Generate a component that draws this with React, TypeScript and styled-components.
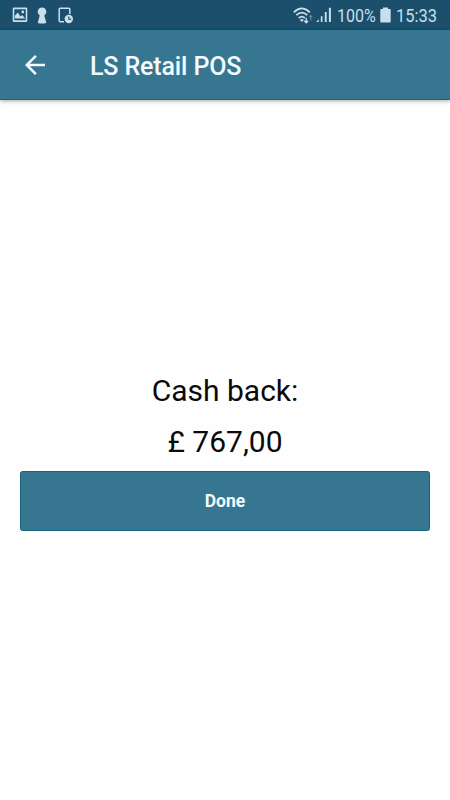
import React from "react";
import styled, { createGlobalStyle } from "styled-components";

const GlobalStyle = createGlobalStyle`
  * { box-sizing: border-box; }
  body { margin: 0; background: #fff; font-family: Roboto, sans-serif; }
`;

const Screen = styled.div`
  display: flex;
  flex-direction: column;
  width: 100%;
  height: 100vh;
  overflow: hidden;
  background: #fefefe;
`;

const StatusBar = styled.div`
  display: flex;
  align-items: center;
  justify-content: space-between;
  flex: none;
  height: 30px;
  padding: 0 13px 0 12px;
  background: #1b4f6c;
  color: #c9dfeb;
`;

const StatusGroup = styled.div`
  display: flex;
  align-items: center;
  svg { display: block; flex: none; }
`;

const StatusText = styled.div<{ $width: number; $scale: number }>`
  width: ${(p) => p.$width}px;
  font-size: 18.5px;
  line-height: 30px;
  padding-top: 1px;
  white-space: nowrap;
  transform: scaleX(${(p) => p.$scale});
  transform-origin: left center;
`;

const AppBar = styled.header`
  display: flex;
  align-items: center;
  flex: none;
  height: 70px;
  padding: 0 20px;
  background: #377691;
  border-top: 1px solid #2f7893;
  border-bottom: 1px solid #17647f;
  box-shadow: 0 1px 4px rgba(0, 0, 0, 0.35);
`;

const BackButton = styled.button`
  display: flex;
  width: 30px;
  height: 30px;
  padding: 0;
  border: 0;
  background: none;
  color: #f2fbff;
`;

const Title = styled.h1`
  margin: 4px 0 0 40px;
  font-size: 25px;
  font-weight: 500;
  letter-spacing: -0.13px;
  line-height: 32px;
  color: #f2fbff;
`;

const Content = styled.main`
  display: flex;
  flex: 1;
  flex-direction: column;
  justify-content: center;
  padding: 0 20px 3px;
`;

const Message = styled.div`
  height: 50px;
  font-size: 30px;
  line-height: 50px;
  text-align: center;
  color: #0a0a0a;

  &:first-child {
    height: 51px;
    margin-top: -1px;
  }
`;

const DoneButton = styled.button`
  height: 60px;
  margin-top: 4px;
  padding: 0;
  border: 1px solid #17647f;
  border-radius: 2.5px;
  background: #377691;
  color: #f2fbff;
  font: 700 17.5px/58px Roboto, sans-serif;
`;

const ImageIcon = () => (
  <svg width="16" height="16" viewBox="0 0 16 16">
    <path fill="currentColor" fillRule="evenodd" d="M2 .5h12q1.300 0 1.300 1.300v11.900q0 1.300-1.300 1.300H2q-1.300 0-1.300-1.300V1.800Q.7.500 2 .5ZM2.300 2.200v11.100h11.400V2.200Z" />
    <path fill="currentColor" d="M2.800 11.500V8.800l3-3.300 2.700 4 1.700-1.500 3 3.500Z" />
    <circle cx="10.800" cy="5" r="1.400" fill="currentColor" />
  </svg>
);

const KeyholeIcon = () => (
  <svg width="10" height="17" viewBox="0 0 10 17">
    <path fill="currentColor" d="M5 .5a4.300 4.300 0 0 1 2.300 7.900L9.300 16Q5 17 .7 16l2-7.600A4.300 4.300 0 0 1 5 .5Z" />
  </svg>
);

const DeviceClockIcon = () => (
  <svg width="16" height="17" viewBox="0 0 16 17" fill="none" stroke="currentColor" strokeWidth="1.500">
    <path d="M6 14.800H2.200q-1 0-1-1V2.200q0-1 1-1h8.600q1 0 1 1V7" />
    <circle cx="10.800" cy="12" r="4.200" fill="currentColor" stroke="none" />
    <path d="M10.800 9.500v2.800h2.500" stroke="#1b4f6c" strokeWidth="1.100" />
  </svg>
);

const WifiIcon = () => (
  <svg width="21" height="17" viewBox="0 0 21 17" fill="none" stroke="currentColor">
    <path strokeWidth="1.800" d="M.8 5.300Q8.800-2.500 16.800 5.300M3.300 8.200q5.500-5.200 11 0M5.800 11q3-2.800 6 0" />
    <path fill="currentColor" stroke="none" d="m7 13 1.900-1.200L10.800 13l-1.900 1.900Z" />
    <path strokeWidth="1.300" d="M13.200 10.800v5M11.300 13.700l1.900 2 1.900-2" />
    <path opacity=".5" strokeWidth="1" d="M17.800 13.500v-5M16.200 10.200l1.600-1.700 1.600 1.700" />
  </svg>
);

const SignalIcon = () => (
  <svg width="17" height="16" viewBox="0 0 17 16" fill="currentColor">
    <path d="M.2 15 2.800 12.200V15ZM4.800 9.200h1.700V15H4.800ZM8.800 5h1.900v10H8.800ZM12.900.8h2V15h-2Z" />
  </svg>
);

const BatteryIcon = () => (
  <svg width="11" height="16" viewBox="0 0 11 16" fill="currentColor">
    <path d="M3 .5h5V2h2q.7 0 .7.700v12q0 .8-.7.800H1q-.7 0-.7-.8v-12Q.3 2 1 2h2Z" />
  </svg>
);

const LeftIcons = styled(StatusGroup)`
  svg:nth-child(2) { margin-left: 9px; }
  svg:nth-child(3) { margin-left: 11px; }
`;

const RightIcons = styled(StatusGroup)`
  svg:nth-child(2) { margin-left: 2px; margin-right: 3.5px; }
  svg:nth-child(4) { margin-right: 5px; }
`;

export default function App() {
  return (
    <>
      <GlobalStyle />
      <Screen>
        <StatusBar>
          <LeftIcons>
            <ImageIcon />
            <KeyholeIcon />
            <DeviceClockIcon />
          </LeftIcons>
          <RightIcons>
            <WifiIcon />
            <SignalIcon />
            <StatusText $width={43.5} $scale={0.865}>100%</StatusText>
            <BatteryIcon />
            <StatusText $width={41} $scale={0.89}>15:33</StatusText>
          </RightIcons>
        </StatusBar>
        <AppBar>
          <BackButton aria-label="Back">
            <svg width="30" height="30" viewBox="0 0 24 24" fill="currentColor">
              <path d="M20 11H7.830l5.590-5.590L12 4l-8 8 8 8 1.410-1.410L7.830 13H20v-2z" />
            </svg>
          </BackButton>
          <Title>LS Retail POS</Title>
        </AppBar>
        <Content>
          <Message>Cash back:</Message>
          <Message>£ 767,00</Message>
          <DoneButton>Done</DoneButton>
        </Content>
      </Screen>
    </>
  );
}
